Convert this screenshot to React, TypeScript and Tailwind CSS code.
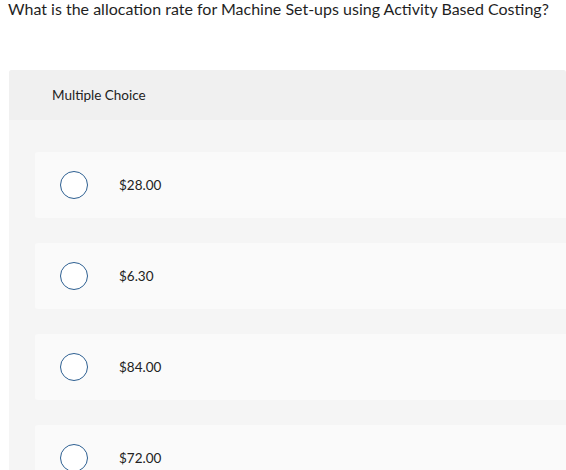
const options = ["$28.00", "$6.30", "$84.00", "$72.00"];

export default function App() {
  return (
    <div
      className="min-h-[470px] w-[566px] overflow-hidden bg-white text-[#222]"
      style={{ fontFamily: "Lato, 'Open Sans', Arial, sans-serif" }}
    >
      <p className="pl-2 pt-0 text-[16px] leading-[18px] text-[#1f1f1f]">
        What is the allocation rate for Machine Set-ups using Activity Based Costing?
      </p>

      <div className="ml-[9px] mt-[52px] rounded-t-[3px] bg-[#f5f5f5]">
        <div className="flex h-[50px] items-center rounded-t-[3px] bg-[#f0f0f0] pl-[43px] text-[13.5px] text-[#222]">
          Multiple Choice
        </div>
        <div className="flex flex-col gap-[25px] pl-[26px] pt-[32px]">
          {options.map((o) => (
            <div
              key={o}
              className="flex h-[66px] items-center rounded-l-[3px] bg-[#fafafa] pl-[25px]"
            >
              <span className="h-[28px] w-[28px] rounded-full border-[1.5px] border-[#2d5f91] bg-white" />
              <span className="ml-[31px] text-[13.5px] text-[#222]">{o}</span>
            </div>
          ))}
        </div>
      </div>
    </div>
  );
}
